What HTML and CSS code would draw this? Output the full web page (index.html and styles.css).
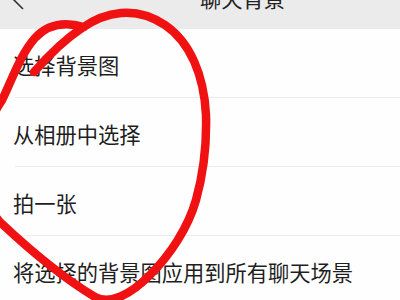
FILE: index.html
```html
<!DOCTYPE html>
<html lang="zh">
<head>
<meta charset="utf-8">
<link rel="stylesheet" href="styles.css">
</head>
<body>
<div class="screen">
  <header class="topbar">
    <svg class="back" width="30" height="29" viewBox="0 0 30 29">
      <polyline points="23,-13 12,-2 23,9" fill="none" stroke="#333" stroke-width="1.6"/>
    </svg>
    <div class="title">聊天背景</div>
  </header>
  <ul class="list">
    <li class="row"><span class="label">选择背景图</span></li>
    <li class="row"><span class="label">从相册中选择</span></li>
    <li class="row"><span class="label">拍一张</span></li>
    <li class="row"><span class="label">将选择的背景图应用到所有聊天场景</span></li>
  </ul>
  <svg class="scribble" width="400" height="300" viewBox="0 0 400 300">
    <path d="M 34 72 C 48 56, 64 40, 82 28 C 105 12, 135 5, 165 25 C 190 42, 204 75, 206 115 C 207 150, 203 175, 196 200 C 188 228, 170 255, 150 275 C 130 295, 110 305, 95 297 C 70 282, 35 255, 0 222 C -20 200, -25 140, 2 100 C 12 80, 20 55, 35 38 C 45 27, 60 20, 84 27" fill="none" stroke="#f01212" stroke-width="8.5" stroke-linecap="round" stroke-linejoin="round"/>
  </svg>
</div>
</body>
</html>
```
FILE: styles.css
```css
html, body {
  margin: 0;
  padding: 0;
  background: #fefefe;
}
.screen {
  position: relative;
  width: 400px;
  height: 300px;
  overflow: hidden;
  font-family: "Noto Sans CJK SC", "Noto Sans", sans-serif;
  color: #1e1e1e;
}
.topbar {
  height: 29px;
  background: #ebebeb;
  display: flex;
  align-items: flex-start;
  overflow: hidden;
}
.back {
  display: block;
  flex: none;
}
.title {
  margin-left: 170px;
  margin-top: -13px;
  font-size: 21.25px;
  line-height: 21px;
  color: #222;
}
.list {
  list-style: none;
  margin: 0;
  padding: 0;
}
.row {
  height: 69px;
  margin-left: 15px;
  border-bottom: 1px solid #ececec;
  display: flex;
  align-items: center;
  padding-top: 3px;
  box-sizing: border-box;
}
.label {
  margin-left: -2px;
  font-size: 21.25px;
  line-height: 24px;
  white-space: nowrap;
}
.scribble {
  position: absolute;
  left: 0;
  top: 0;
  pointer-events: none;
  overflow: visible;
}
```
